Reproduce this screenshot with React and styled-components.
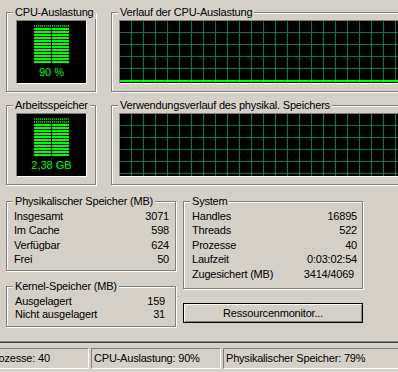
import React from "react"
import styled, { createGlobalStyle } from "styled-components"

const GlobalStyle = createGlobalStyle`
  *, *::before, *::after { box-sizing: border-box; }
  html, body { margin: 0; padding: 0; background: #d4d0c8; overflow: hidden; }
  body {
    font-family: "Liberation Sans", Arial, sans-serif;
    font-size: 11px;
    letter-spacing: -0.2px;
    color: #000;
  }
`

const Window = styled.div`
  width: 440px;
  height: 372px;
  display: flex;
  flex-direction: column;
`

const TabPage = styled.div`
  height: 343px;
  padding: 12px 0 0 6px;
  border-bottom: 1px solid #404040;
  box-shadow: inset 0 -1px #808080;
`

const Monitors = styled.div`
  display: grid;
  grid-template-columns: 90px 330px;
  grid-template-rows: 80px 80px;
  column-gap: 15px;
  row-gap: 13px;
`

const GroupBox = styled.div`
  --pt: ${p => p.$pt ?? 7}px;
  --pl: ${p => p.$pl ?? 8}px;
  display: flex;
  flex-direction: column;
  height: ${p => (p.$h ? `${p.$h}px` : "auto")};
  padding: var(--pt) ${p => p.$pr ?? 8}px ${p => p.$pb ?? 0}px var(--pl);
  border: 1px solid #808080;
  box-shadow: inset 1px 1px #fff, 1px 1px #fff;
`

/* sits on the top border, takes no height of its own */
const Legend = styled.span`
  align-self: flex-start;
  margin: calc(-7px - var(--pt)) 0 calc(var(--pt) - 6px) calc(6px - var(--pl));
  padding: 0 2px;
  line-height: 13px;
  background: #d4d0c8;
  white-space: nowrap;
`

const Meter = styled.div`
  flex: 1;
  display: flex;
  flex-direction: column;
  align-items: center;
  padding-top: 4px;
  background: #000;
  border: 1px solid;
  border-color: #808080 #fff #fff #808080;
`

const Bars = styled.div`
  display: grid;
  grid-template-columns: 17px 17px;
  column-gap: 1px;
  row-gap: 1px;
`

const Cell = styled.div`
  height: 2px;
  background: ${p =>
    p.$on
      ? "#00ff00"
      : "repeating-linear-gradient(90deg, #00b000 0 1px, #003800 1px 2px)"};
`

const Reading = styled.div`
  margin-top: 3px;
  line-height: 13px;
  color: #00ff00;
  letter-spacing: 0;
`

const Graph = styled.div`
  flex: 1;
  display: flex;
  align-items: flex-end;
  background-color: #000;
  background-image:
    linear-gradient(to bottom, transparent 11px, #008040 11px),
    linear-gradient(to right, transparent 11px, #008040 11px);
  background-size: 12px 12px;
  border: 1px solid;
  border-color: #808080 #fff #fff #808080;

  svg { display: block; }
`

const Details = styled.div`
  display: grid;
  grid-template-columns: 170px 180px;
  column-gap: 7px;
  margin-top: 16px;
`

const Column = styled.div`
  display: flex;
  flex-direction: column;
  gap: ${p => p.$gap}px;
`

const StatList = styled.div`
  line-height: ${p => p.$lh}px;
`

const StatRow = styled.div`
  display: flex;
  justify-content: space-between;
  white-space: nowrap;

  span:last-child {
    padding-right: ${p => p.$inset ?? 0}px;
  }
`

const Button = styled.button`
  height: 20px;
  padding: 0;
  font-family: "Liberation Sans", Arial, sans-serif;
  font-size: 11px;
  letter-spacing: -0.2px;
  color: #000;
  background: #d4d0c8;
  border: 1px solid #000;
  box-shadow: inset 1px 1px #fff, inset -1px -1px #808080;
`

const StatusBar = styled.div`
  display: flex;
  gap: 2px;
  margin: 5px 0 0 -15px;
`

const Pane = styled.div`
  flex: ${p => (p.$w ? `0 0 ${p.$w}px` : "1")};
  height: 21px;
  padding: 0 2px;
  line-height: 19px;
  white-space: nowrap;
  overflow: hidden;
  border: 1px solid;
  border-color: #808080 #fff #fff #808080;
`

const ROWS = 13

const UsageMeter = ({ percent, label }) => {
  const lit = Math.ceil(ROWS * percent / 100)
  const cells = []
  for (let r = 0; r < ROWS; r++) {
    const on = r >= ROWS - lit
    cells.push(<Cell key={r + "a"} $on={on} />, <Cell key={r + "b"} $on={on} />)
  }
  return (
    <Meter>
      <Bars>{cells}</Bars>
      <Reading>{label}</Reading>
    </Meter>
  )
}

const HistoryGraph = ({ values }) => (
  <Graph>
    {values && (
      <svg width="100%" height="4">
        <polyline
          fill="none"
          stroke="#00ff00"
          strokeWidth="2"
          points={values.map((v, i) => `${i * 6},${2 - v * 0.6}`).join(" ")}
        />
      </svg>
    )}
  </Graph>
)

const physical = [
  ["Insgesamt", "3071"],
  ["Im Cache", "598"],
  ["Verfügbar", "624"],
  ["Frei", "50"],
]

const kernel = [
  ["Ausgelagert", "159"],
  ["Nicht ausgelagert", "31"],
]

const system = [
  ["Handles", "16895"],
  ["Threads", "522"],
  ["Prozesse", "40"],
  ["Laufzeit", "0:03:02:54"],
  ["Zugesichert (MB)", "3414/4069", 3],
]

const Stats = ({ rows, lh }) => (
  <StatList $lh={lh}>
    {rows.map(([k, v, inset]) => (
      <StatRow key={k} $inset={inset}>
        <span>{k}</span>
        <span>{v}</span>
      </StatRow>
    ))}
  </StatList>
)

export default function App() {
  const cpuHistory = Array.from({ length: 60 }, () => 0)

  return (
    <>
      <GlobalStyle />
      <Window>
        <TabPage>
          <Monitors>
            <GroupBox $pl={9} $pr={8} $pb={7}>
              <Legend>CPU-Auslastung</Legend>
              <UsageMeter percent={90} label="90 %" />
            </GroupBox>
            <GroupBox $pl={7} $pr={8} $pb={7}>
              <Legend>Verlauf der CPU-Auslastung</Legend>
              <HistoryGraph values={cpuHistory} />
            </GroupBox>
            <GroupBox $pl={9} $pr={8} $pb={7}>
              <Legend>Arbeitsspeicher</Legend>
              <UsageMeter percent={79} label="2,38 GB" />
            </GroupBox>
            <GroupBox $pl={7} $pr={8} $pb={7}>
              <Legend>Verwendungsverlauf des physikal. Speichers</Legend>
              <HistoryGraph />
            </GroupBox>
          </Monitors>

          <Details>
            <Column $gap={15}>
              <GroupBox $h={70} $pt={7} $pl={7} $pr={6}>
                <Legend>Physikalischer Speicher (MB)</Legend>
                <Stats rows={physical} lh={14.4} />
              </GroupBox>
              <GroupBox $h={41} $pt={8} $pl={8} $pr={10}>
                <Legend>Kernel-Speicher (MB)</Legend>
                <Stats rows={kernel} lh={13.4} />
              </GroupBox>
            </Column>
            <Column $gap={14}>
              <GroupBox $h={88} $pt={7} $pl={8} $pr={5}>
                <Legend>System</Legend>
                <Stats rows={system} lh={14.4} />
              </GroupBox>
              <Button>Ressourcenmonitor...</Button>
            </Column>
          </Details>
        </TabPage>

        <StatusBar>
          <Pane $w={104}>Prozesse: 40</Pane>
          <Pane $w={130}>CPU-Auslastung: 90%</Pane>
          <Pane>Physikalischer Speicher: 79%</Pane>
        </StatusBar>
      </Window>
    </>
  )
}
